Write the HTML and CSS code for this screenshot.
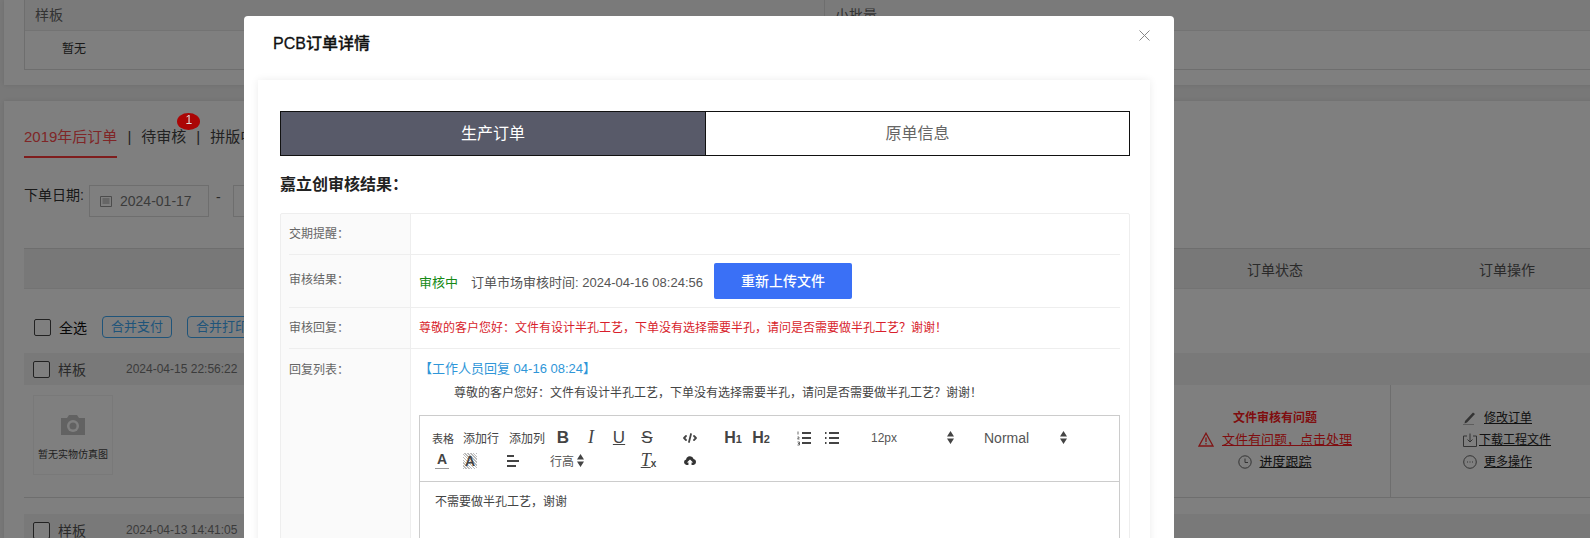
FILE: index.html
```html
<!DOCTYPE html>
<html lang="zh-CN">
<head>
    <meta charset="UTF-8">
    <title>PCB订单详情</title>
    <link rel="stylesheet" href="styles.css">
</head>
<body>
    <!-- page behind the dialog -->
    <div class="card card-top">
        <div class="type-table">
            <div class="type-col">
                <div class="type-head">样板</div>
                <div class="type-cell">暂无</div>
            </div>
            <div class="type-col type-col-right">
                <div class="type-head">小批量</div>
                <div class="type-cell"></div>
            </div>
        </div>
    </div>

    <div class="card card-orders">
        <div class="tabs">
            <span class="tab tab-active">2019年后订单</span>
            <span class="tab-sep">|</span>
            <span class="tab tab-badge">待审核<i class="badge">1</i></span>
            <span class="tab-sep">|</span>
            <span class="tab">拼版中</span>
        </div>

        <div class="date-row">
            <span class="date-label">下单日期:</span>
            <span class="date-input">
                <svg class="cal-icon" viewBox="0 0 12 12"><path d="M.5 1.500h11v10H.5zM2.500 4h7M2.500 6h7M2.500 8h7" fill="none" stroke="#999"/></svg>
                2024-01-17
            </span>
            <span class="date-dash">-</span>
            <span class="date-input"></span>
        </div>

        <div class="order-table">
            <div class="list-head">
                <span class="list-head-fill"></span>
                <span class="col-status">订单状态</span>
                <span class="col-ops">订单操作</span>
            </div>

            <div class="select-row">
                <span class="check"></span>
                <span class="select-all">全选</span>
                <span class="line-btn">合并支付</span>
                <span class="line-btn">合并打印</span>
            </div>

            <div class="order-head">
                <span class="check"></span>
                <span class="order-type">样板</span>
                <span class="order-time">2024-04-15 22:56:22</span>
            </div>
            <div class="order-body">
                <div class="order-main">
                    <div class="thumb">
                        <svg class="camera" viewBox="0 0 26 20"><path d="M1 3h6l2-3h8l2 3h6v17H1z" fill="#c4c4c4"/><circle cx="13" cy="11" r="6" fill="#fff"/><circle cx="13" cy="11" r="3.500" fill="#c4c4c4"/></svg>
                        <span>暂无实物仿真图</span>
                    </div>
                </div>
                <div class="col-status status-cell">
                    <b class="status-title">文件审核有问题</b>
                    <a class="status-link">
                        <svg class="ico-warn" viewBox="0 0 16 15"><path d="M8 1.200 15 14H1z" fill="none" stroke="#ff2a2a" stroke-width="1.300"/><path d="M8 5.500v4.500M8 11v1.500" stroke="#ff2a2a" stroke-width="1.300"/></svg>
                        文件有问题&#65292;点击处理
                    </a>
                    <a class="plain-link link-wide">
                        <svg class="ico" viewBox="0 0 14 14"><circle cx="7" cy="7" r="6.200" fill="none" stroke="#666"/><path d="M7 3.500V7.500h3" fill="none" stroke="#666"/></svg>
                        进度跟踪
                    </a>
                </div>
                <div class="col-ops ops-cell">
                    <a class="plain-link">
                        <svg class="ico" viewBox="0 0 14 14"><path d="M2 10 10 1.500l2 1.500-8 8.500-2.500 1z" fill="#666"/><path d="M0 14h11" stroke="#777"/></svg>
                        修改订单
                    </a>
                    <a class="plain-link link-tight">
                        <svg class="ico" viewBox="0 0 14 14"><path d="M4 3H.5v10.500h13V3H10M7 .5V9M4.500 6.500 7 9l2.500-2.500" fill="none" stroke="#666"/></svg>
                        下载工程文件
                    </a>
                    <a class="plain-link">
                        <svg class="ico" viewBox="0 0 14 14"><circle cx="7" cy="7" r="6.300" fill="none" stroke="#666"/><path d="M4 7h1M6.500 7h1M9 7h1" stroke="#666"/></svg>
                        更多操作
                    </a>
                </div>
            </div>

            <div class="order-head order-head-next">
                <span class="check"></span>
                <span class="order-type">样板</span>
                <span class="order-time">2024-04-13 14:41:05</span>
            </div>
        </div>
    </div>

    <div class="mask"></div>

    <!-- dialog -->
    <div class="dialog">
        <div class="dialog-head">
            <span class="dialog-title">PCB订单详情</span>
            <svg class="dialog-close" viewBox="0 0 11 11"><path d="M.5.500l10 10M10.500.500l-10 10" stroke="#888" fill="none"/></svg>
        </div>

        <div class="detail-box">
            <div class="switch">
                <span class="switch-item switch-on">生产订单</span>
                <span class="switch-item">原单信息</span>
            </div>

            <h3 class="result-title">嘉立创审核结果&#65306;</h3>

            <div class="info-table">
                <div class="info-row row-remind">
                    <div class="info-label">交期提醒&#65306;</div>
                    <div class="info-value"></div>
                </div>
                <div class="info-row row-result">
                    <div class="info-label">审核结果&#65306;</div>
                    <div class="info-value result-value">
                        <span class="state-green">审核中</span>
                        <span class="audit-time">订单市场审核时间: 2024-04-16 08:24:56</span>
                        <span class="upload-btn">重新上传文件</span>
                    </div>
                </div>
                <div class="info-row row-reply">
                    <div class="info-label">审核回复&#65306;</div>
                    <div class="info-value reply-red">尊敬的客户您好&#65306;文件有设计半孔工艺&#65292;下单没有选择需要半孔&#65292;请问是否需要做半孔工艺&#65311;谢谢&#65281;</div>
                </div>
                <div class="info-row row-list">
                    <div class="info-label">回复列表&#65306;</div>
                    <div class="info-value">
                        <div class="reply-who">【工作人员回复 04-16 08:24】</div>
                        <div class="reply-text">尊敬的客户您好&#65306;文件有设计半孔工艺&#65292;下单没有选择需要半孔&#65292;请问是否需要做半孔工艺&#65311;谢谢&#65281;</div>

                        <div class="editor">
                            <div class="toolbar">
                                <div class="tool-line">
                                    <span class="tool-text tool-table">表格</span>
                                    <span class="tool-text tool-add">添加行</span>
                                    <span class="tool-text tool-add tool-add2">添加列</span>
                                    <span class="tool t-bold">B</span>
                                    <span class="tool t-italic">I</span>
                                    <span class="tool t-under">U</span>
                                    <span class="tool t-strike end">S</span>
                                    <span class="tool end"><svg viewBox="0 0 18 18"><path d="M5 7 3 9l2 2M13 7l2 2-2 2M10 5 8 13" fill="none" stroke="#444" stroke-width="1.800" stroke-linecap="round" stroke-linejoin="round"/></svg></span>
                                    <span class="tool t-head">H<small>1</small></span>
                                    <span class="tool t-head end">H<small>2</small></span>
                                    <span class="tool"><svg viewBox="0 0 18 18"><path d="M7 4h9M7 9h9M7 14h9" stroke="#444" stroke-width="1.800"/><path d="M3 2.500v3M2.500 8h1.500v.5l-1.500 1.500h2M2.500 13h2v3h-2M3 14.500h1" stroke="#444" stroke-width=".8" fill="none"/></svg></span>
                                    <span class="tool end"><svg viewBox="0 0 18 18"><path d="M6 4h10M6 9h10M6 14h10" stroke="#444" stroke-width="1.800"/><path d="M2 4h1.500M2 9h1.500M2 14h1.500" stroke="#444" stroke-width="1.800"/></svg></span>
                                    <span class="picker picker-size end">12px<svg class="arrows" viewBox="0 0 7 13"><path d="M0 5.500 3.500 0 7 5.500zM0 7.500 3.500 13 7 7.500z" fill="#444"/></svg></span>
                                    <span class="picker picker-head">Normal<svg class="arrows" viewBox="0 0 7 13"><path d="M0 5.500 3.500 0 7 5.500zM0 7.500 3.500 13 7 7.500z" fill="#444"/></svg></span>
                                </div>
                                <div class="tool-line">
                                    <span class="tool"><span class="t-color">A</span></span>
                                    <span class="tool end"><span class="t-bg">A</span></span>
                                    <span class="tool end"><svg viewBox="0 0 18 18"><path d="M3 4h7M3 9h12M3 14h9" stroke="#444" stroke-width="1.800"/></svg></span>
                                    <span class="picker picker-line">行高<svg class="arrows" viewBox="0 0 7 13"><path d="M0 5.500 3.500 0 7 5.500zM0 7.500 3.500 13 7 7.500z" fill="#444"/></svg></span>
                                    <span class="tool t-clear end"><u>T</u><small>x</small></span>
                                    <span class="tool tool-cloud"><svg viewBox="0 0 18 18"><path d="M4.500 14A3.500 3.500 0 0 1 4 7.100 5 5 0 0 1 13.700 6.500 3.800 3.800 0 0 1 13.500 14H11v-3h2L9 7l-4 4h2v3z" fill="#333"/></svg></span>
                                </div>
                            </div>
                            <div class="editor-body">不需要做半孔工艺&#65292;谢谢</div>
                        </div>
                    </div>
                </div>
            </div>
        </div>
    </div>
</body>
</html>
```

FILE: styles.css
```css
html, body {
    margin: 0;
    height: 538px;
    overflow: hidden;
}

body {
    background-color: #f0f0f0;
    font-family: "Liberation Sans", "Noto Sans CJK SC", sans-serif;
    font-size: 14px;
    color: #333;
}

/* page behind */
.card {
    background-color: #fff;
    margin: 0 -40px 0 4px;
    padding: 0 20px;
    box-shadow: 0 0 4px rgba(0, 0, 0, 0.1);
}

.card-top {
    height: 85px;
    margin-bottom: 16px;
    box-sizing: border-box;
}

.card-orders {
    height: 437px;
    overflow: hidden;
}

.type-table {
    display: flex;
    border-left: 1px solid #ddd;
    border-bottom: 1px solid #ddd;
    height: 70px;
    box-sizing: border-box;
}

.type-col {
    width: 799px;
}

.type-col-right {
    flex: 1;
    border-left: 1px solid #ddd;
}

.type-head {
    height: 30px;
    line-height: 30px;
    padding-left: 10px;
    background-color: #f5f5f5;
    border-bottom: 1px solid #e6e6e6;
    color: #666;
}

.type-cell {
    line-height: 36px;
    padding-left: 37px;
    font-size: 12px;
}

.tabs {
    display: flex;
    align-items: flex-start;
    padding-top: 24px;
    font-size: 15px;
    color: #444;
}

.tab {
    height: 31px;
    line-height: 24px;
}

.tab-active {
    color: #ff4d4f;
    border-bottom: 2px solid #ff3b3b;
}

.tab-sep {
    margin: 0 10px;
    line-height: 24px;
}

.tab-badge {
    position: relative;
}

.badge {
    position: absolute;
    left: 36px;
    top: -12px;
    width: 23px;
    height: 17px;
    line-height: 15px;
    border-radius: 50%;
    background-color: #ab0505;
    color: #ddd;
    font-size: 12px;
    font-style: normal;
    text-align: center;
    z-index: 2;
}

.date-row {
    display: flex;
    align-items: center;
    margin-top: 27px;
    height: 32px;
}

.date-label {
    width: 65px;
    margin-top: -14px;
}

.date-input {
    display: flex;
    align-items: center;
    width: 120px;
    height: 32px;
    box-sizing: border-box;
    padding-left: 10px;
    border: 1px solid #ddd;
    background-color: #fff;
    color: #777;
}

.cal-icon {
    width: 12px;
    height: 12px;
    margin-right: 8px;
}

.date-dash {
    width: 24px;
    padding-left: 7px;
    margin-top: -8px;
    box-sizing: border-box;
    color: #555;
}

.list-head {
    display: flex;
    align-items: center;
    height: 41px;
    margin-top: 31px;
    background-color: #f0f0f0;
    border-top: 1px solid #ddd;
    border-bottom: 1px solid #e6e6e6;
    box-sizing: border-box;
    color: #555;
}

.list-head-fill,
.order-main {
    flex: 1;
}

.col-status {
    width: 230px;
    text-align: center;
}

.col-ops {
    width: 234px;
    text-align: center;
}

.order-table {
    width: 1600px;
}

.select-row {
    display: flex;
    align-items: center;
    height: 24px;
    margin-top: 26px;
    padding-left: 10px;
}

.check {
    width: 15px;
    height: 15px;
    border: 1px solid #444;
    border-radius: 2px;
    background-color: #fff;
    flex: none;
}

.select-all {
    margin: 0 15px 0 8px;
    color: #111;
}

.line-btn {
    width: 70px;
    height: 22px;
    line-height: 20px;
    box-sizing: border-box;
    border: 1px solid #3fa9f5;
    border-radius: 4px;
    margin-right: 15px;
    text-align: center;
    font-size: 13px;
    color: #3fa9f5;
}

.order-head {
    display: flex;
    align-items: center;
    height: 32px;
    margin-top: 14px;
    padding-left: 9px;
    background-color: #f2f2f2;
}

.order-head-next {
    margin-top: 16px;
}

.order-type {
    margin: 0 40px 0 8px;
    color: #555;
}

.order-time {
    font-size: 12px;
    color: #777;
}

.order-body {
    display: flex;
    height: 113px;
    border-bottom: 1px solid #ddd;
    box-sizing: border-box;
}

.order-main {
    padding: 10px 0 0 9px;
}

.thumb {
    display: flex;
    flex-direction: column;
    align-items: center;
    width: 80px;
    height: 80px;
    box-sizing: border-box;
    padding-top: 19px;
    border: 1px solid #f2f2f2;
    font-size: 10px;
    color: #444;
}

.camera {
    width: 26px;
    height: 20px;
    margin-bottom: 11px;
}

.status-cell,
.ops-cell {
    display: flex;
    flex-direction: column;
    align-items: center;
    justify-content: center;
    font-size: 12px;
    line-height: 22px;
    padding-bottom: 3px;
    box-sizing: border-box;
}

.ops-cell {
    border-left: 1px solid #ddd;
    padding-right: 6px;
}

.status-title {
    color: #ff1a20;
}

.status-link {
    display: flex;
    align-items: center;
    font-size: 13px;
    color: #ff1a20;
    text-decoration: underline;
}

.plain-link {
    display: flex;
    align-items: center;
    font-size: 12px;
    color: #222;
    text-decoration: underline;
}

.link-wide {
    font-size: 13px;
}

.ico-warn {
    width: 16px;
    height: 15px;
    margin-right: 8px;
}

.ico {
    width: 14px;
    height: 14px;
    margin-right: 7px;
}

.link-tight .ico {
    margin-right: 2px;
}

.ops-cell .plain-link {
    align-self: flex-start;
    margin-left: 72px;
}

/* overlay */
.mask {
    position: fixed;
    inset: 0;
    background-color: rgba(0, 0, 0, 0.5);
    z-index: 1;
}

.dialog {
    position: fixed;
    left: 244px;
    top: 16px;
    width: 930px;
    height: 600px;
    background-color: #fff;
    border-radius: 4px;
    z-index: 3;
}

.dialog-head {
    display: flex;
    justify-content: space-between;
    align-items: flex-start;
    height: 64px;
    box-sizing: border-box;
    padding: 15px 24px 0 29px;
}

.dialog-title {
    font-size: 16px;
    line-height: 26px;
    font-weight: 500;
    color: #111;
    -webkit-text-stroke: 0.3px #111;
}

.dialog-close {
    width: 11px;
    height: 11px;
    margin-top: -1px;
}

.detail-box {
    margin: 0 24px 0 14px;
    padding: 31px 20px 0 22px;
    height: 600px;
    box-shadow: 0 0 8px rgba(0, 0, 0, 0.08);
}

.switch {
    display: flex;
    height: 45px;
    box-sizing: border-box;
    border: 1px solid #111;
}

.switch-item {
    flex: 1;
    line-height: 43px;
    text-align: center;
    font-size: 16px;
    color: #666;
}

.switch-on {
    flex: none;
    width: 425px;
    box-sizing: border-box;
    background-color: #585a69;
    border-right: 1px solid #111;
    color: #fff;
}

.result-title {
    margin: 17px 0 16px;
    font-size: 16px;
    line-height: 24px;
    font-weight: bold;
    color: #222;
}

.info-table {
    border: 1px solid #eee;
    border-radius: 2px;
    padding: 0 9px 0 8px;
    background: linear-gradient(to right, #fafafa 129px, #eee 129px, #eee 130px, #fff 130px);
    height: 400px;
}

.info-row {
    display: grid;
    grid-template-columns: 121px 1fr;
    border-bottom: 1px solid #eee;
    box-sizing: border-box;
    font-size: 12px;
}

.row-list {
    border-bottom: none;
}

.info-label {
    color: #666;
}

.info-value {
    padding-left: 9px;
}

.row-remind {
    height: 41px;
    padding-top: 10px;
}

.row-result {
    height: 53px;
    padding-top: 8px;
}

.row-result .info-label {
    padding-top: 7px;
}

.result-value {
    display: flex;
    align-items: center;
    align-self: start;
    height: 36px;
    font-size: 13px;
}

.state-green {
    color: #168a16;
    margin-right: 13px;
}

.audit-time {
    color: #555;
    margin-right: 11px;
}

.upload-btn {
    width: 138px;
    height: 36px;
    line-height: 36px;
    border-radius: 2px;
    background-color: #3a70f6;
    color: #fff;
    font-size: 14px;
    font-weight: 500;
    text-align: center;
}

.row-reply {
    height: 41px;
    padding-top: 10px;
}

.reply-red {
    color: #d81e2c;
}

.row-list {
    padding-top: 11px;
}

.reply-who {
    font-size: 13px;
    line-height: 18px;
    color: #2f96d8;
}

.reply-text {
    margin-top: 6px;
    padding-left: 35px;
    line-height: 18px;
    color: #444;
}

.editor {
    margin-top: 13px;
    width: 701px;
    box-sizing: border-box;
    border: 1px solid #ccc;
}

.toolbar {
    height: 66px;
    padding: 10px 0 0 8px;
    box-sizing: border-box;
    border-bottom: 1px solid #ccc;
}

.tool-line {
    display: flex;
    align-items: center;
    height: 23px;
}

.tool {
    display: flex;
    align-items: center;
    justify-content: center;
    width: 28px;
    height: 23px;
    color: #444;
    flex: none;
}

.tool svg {
    width: 18px;
    height: 18px;
}

.tool-cloud svg {
    width: 14px;
    height: 14px;
}

.end {
    margin-right: 15px;
}

.tool-text {
    color: #444;
    font-size: 12px;
    box-sizing: border-box;
}

.tool-table {
    width: 30px;
    padding-left: 4px;
    font-size: 11px;
}

.tool-add {
    width: 46px;
    padding-left: 5px;
}

.tool-add2 {
    width: 45px;
}

.t-bold {
    font-size: 17px;
    font-weight: bold;
}

.t-italic {
    font-family: "Liberation Serif", serif;
    font-size: 18px;
    font-style: italic;
}

.t-under {
    font-size: 17px;
    text-decoration: underline;
}

.t-strike {
    font-size: 17px;
    text-decoration: line-through;
}

.t-head {
    font-size: 16px;
    font-weight: bold;
}

.t-head small {
    font-size: 11px;
    margin-top: 3px;
}

.picker {
    display: flex;
    align-items: center;
    justify-content: space-between;
    box-sizing: border-box;
    flex: none;
    height: 23px;
    color: #555;
}

.arrows {
    width: 7px;
    height: 13px;
}

.picker-size {
    width: 98px;
    padding: 0 5px 0 10px;
    font-size: 12px;
}

.picker-head {
    width: 98px;
    padding: 0 5px 0 10px;
    font-size: 14px;
}

.picker-line {
    width: 91px;
    padding: 0 49px 0 8px;
    font-size: 12px;
}

.t-color {
    font-weight: bold;
    font-size: 14px;
    line-height: 15px;
    border-bottom: 1px solid #999;
    padding: 0 2px 1px;
}

.t-bg {
    font-weight: bold;
    font-size: 14px;
    line-height: 16px;
    padding: 0 2px;
    background: repeating-linear-gradient(45deg, #bbb 0, #bbb 1px, #fff 1px, #fff 2px);
}

.t-clear {
    font-family: "Liberation Serif", serif;
    font-size: 18px;
    font-style: italic;
    padding-left: 3px;
    box-sizing: border-box;
}

.t-clear small {
    font-family: "Liberation Sans", sans-serif;
    font-size: 10px;
    font-style: normal;
    font-weight: bold;
    margin-top: 6px;
}

.editor-body {
    padding: 11px 15px;
    height: 120px;
    line-height: 18px;
    color: #444;
}
```
